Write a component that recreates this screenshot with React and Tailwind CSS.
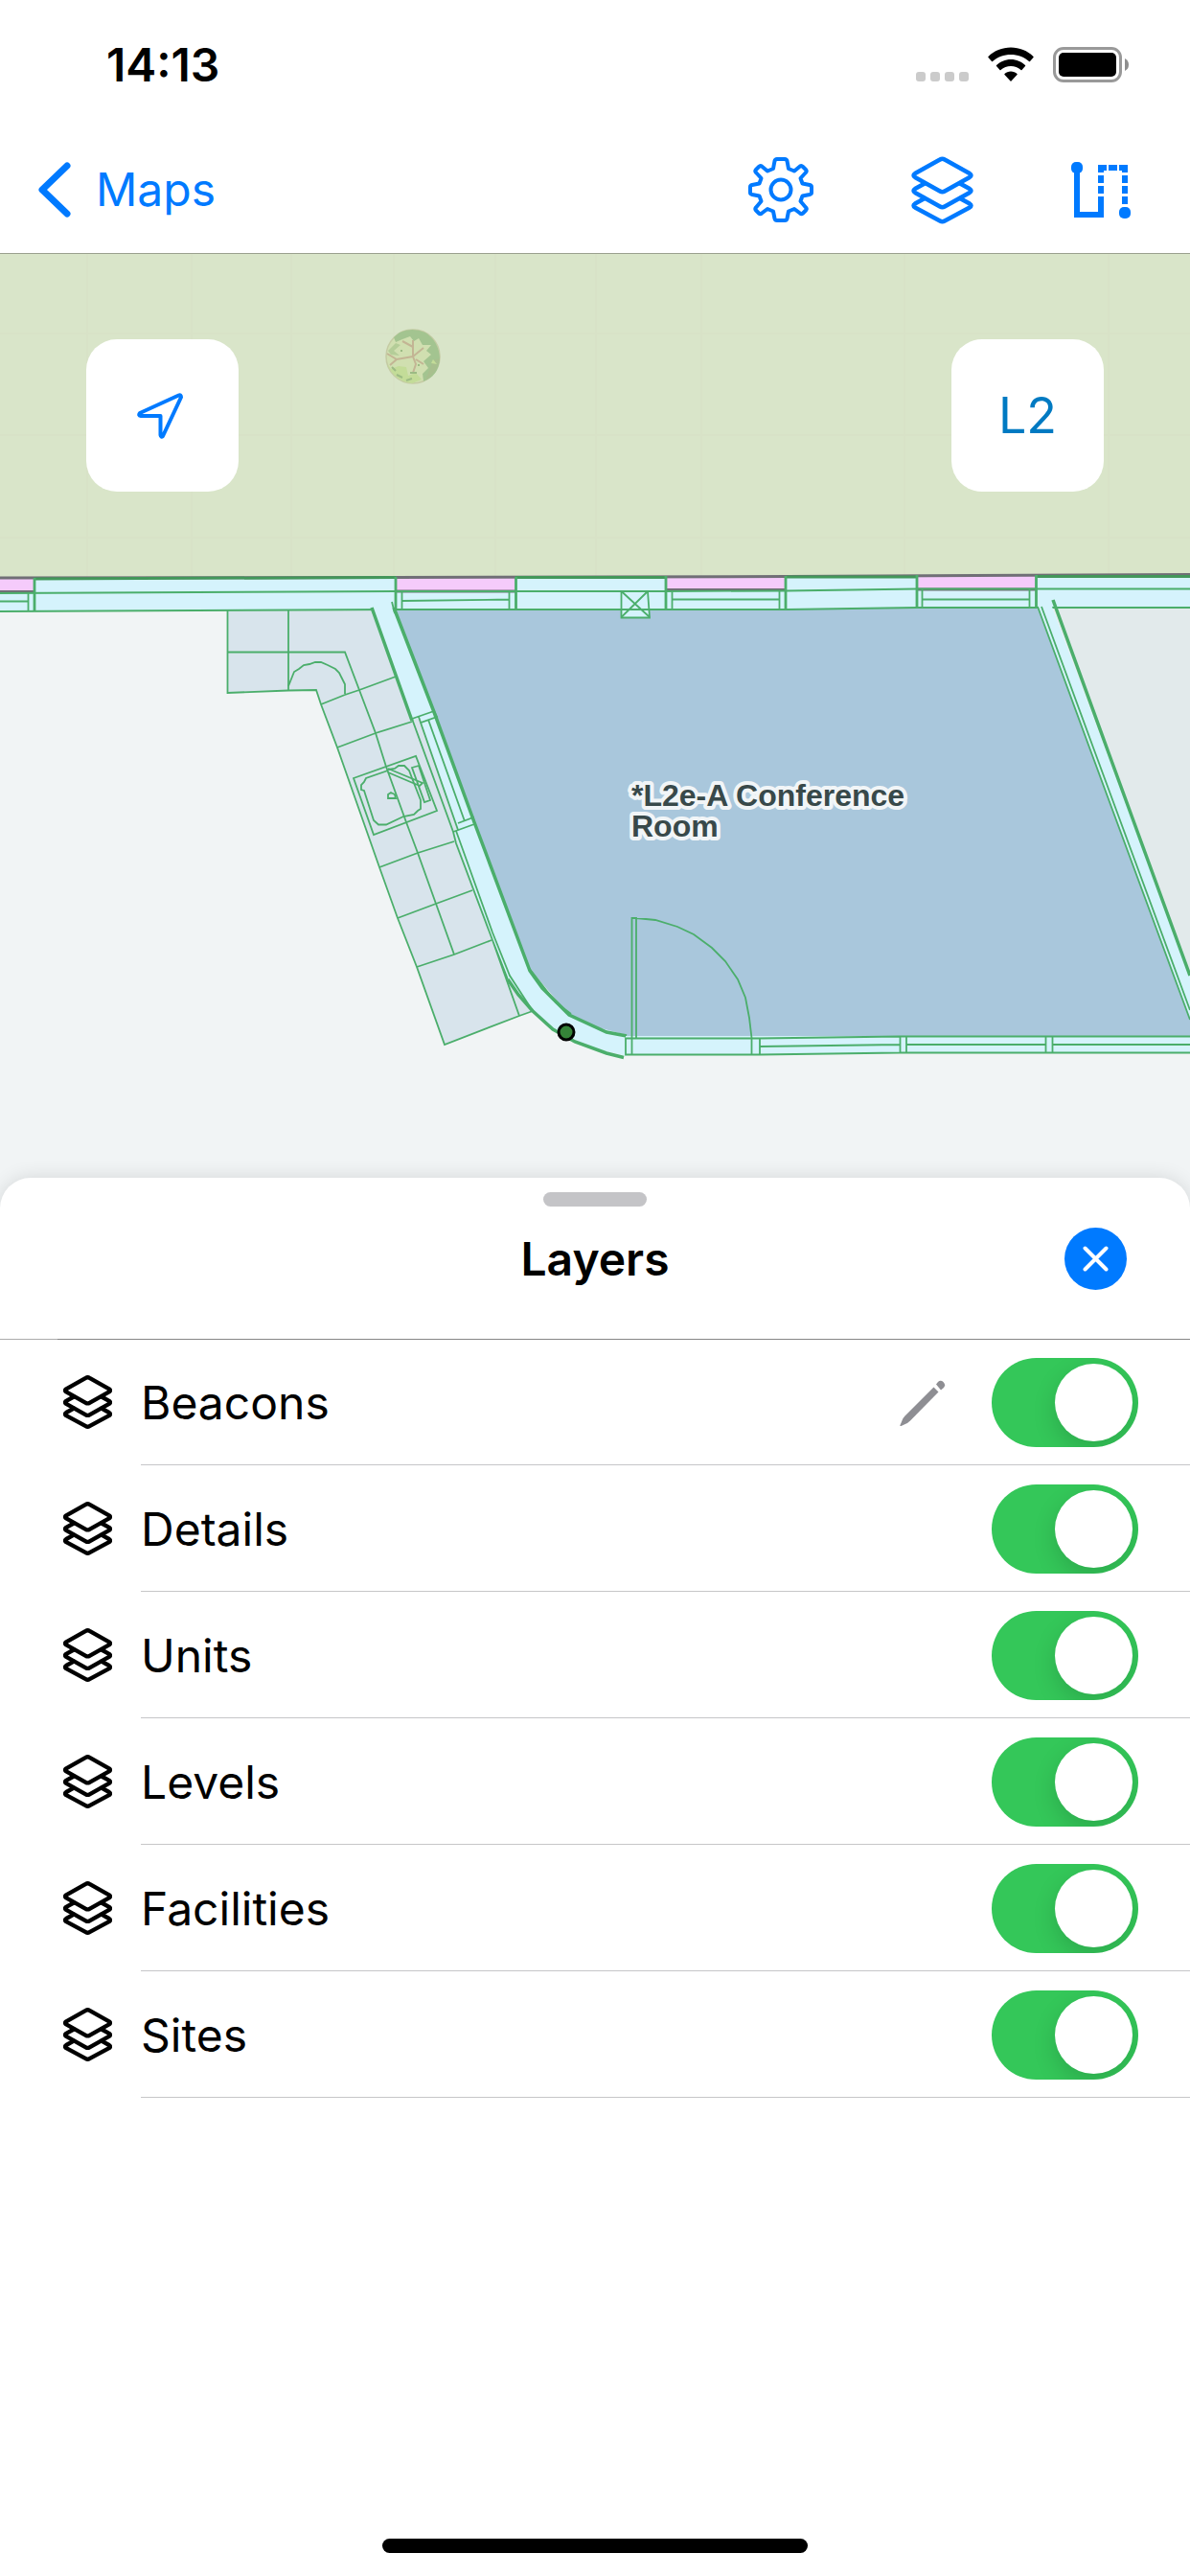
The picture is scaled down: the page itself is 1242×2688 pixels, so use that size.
import { useState } from "react";

const initialLayers = [
  { name: "Beacons", editable: true, visible: true },
  { name: "Details", visible: true },
  { name: "Units", visible: true },
  { name: "Levels", visible: true },
  { name: "Facilities", visible: true },
  { name: "Sites", visible: true },
];

function LayersIcon({ className, strokeWidth }) {
  return (
    <svg
      viewBox="0 0 65 71"
      className={className}
      fill="none"
      stroke="currentColor"
      strokeWidth={strokeWidth}
      strokeLinejoin="round"
      strokeLinecap="round"
      aria-hidden="true"
    >
      <path d="M30 3.5Q32.500 2 35 3.500L61 18Q64 20 61 22L35 36.500Q32.500 38 30 36.500L4 22Q1 20 4 18Z" />
      <path d="M14 28.500L4 34Q1 36 4 38L30 52.500Q32.500 54 35 52.500L61 38Q64 36 61 34L51 28.500" />
      <path d="M14 44L4 49.500Q1 51.500 4 53.500L30 67.500Q32.500 69 35 67.500L61 53.500Q64 51.500 61 49.500L51 44" />
    </svg>
  );
}

function GearIcon() {
  return (
    <svg
      viewBox="0 0 68 68"
      className="size-[68px]"
      fill="none"
      stroke="currentColor"
      strokeWidth="4"
      strokeLinejoin="round"
      aria-hidden="true"
    >
      <circle cx="34" cy="34" r="10.500" />
      <path d="M30 2H38Q40 2 40.500 4L42 12L48 14.500L54 9.500Q55.500 8.500 57 10L60 13Q61.500 14.500 60 16L54.500 22L56.500 27.500L64 29Q66 29.500 66 31V37Q66 38.500 64 39L56.500 40.500L54.500 46L60 52.500Q61.500 54 60 55.500L57 58.500Q55.500 60 54 58.500L48 54L42 56.500L40.500 64Q40 66 38 66H30Q28 66 27.500 64L26 56.500L20 54L14 58.500Q12.500 60 11 58.500L8 55.500Q6.500 54 8 52.500L13.500 46L11.500 40.500L4 39Q2 38.500 2 37V31Q2 29.500 4 29L11.500 27.500L13.500 22L8 16Q6.500 14.500 8 13L11 10Q12.500 8.500 14 9.500L20 14.500L26 12L27.500 4Q28 2 30 2Z" />
    </svg>
  );
}

function RouteIcon() {
  return (
    <svg viewBox="0 0 62 59" className="h-[59px] w-[62px]" fill="none" stroke="currentColor" strokeWidth="6" aria-hidden="true">
      <path d="M6 8V55H31V36" />
      <path d="M31 33V25M31 22V14M28 6H37M31 11V3M39 6H48M50 6H59M56 11V3M56 14V22M56 25V33M56 36V44" />
      <rect x="0" y="0" width="12" height="12" rx="5" fill="currentColor" stroke="none" />
      <rect x="50" y="47" width="12" height="12" rx="5" fill="currentColor" stroke="none" />
    </svg>
  );
}

function StatusBar() {
  return (
    <div className="flex h-[132px] items-start justify-between pt-[38px] pr-16 pl-[111px] text-black">
      <span className="text-5xl leading-[60px] font-semibold">14:13</span>
      <div className="flex items-start gap-5 pt-[11px]">
        <svg viewBox="0 0 55 37" className="h-[37px] w-[55px]" fill="#cbcbcb" aria-hidden="true">
          <rect x="0" y="26" width="10" height="10" rx="3" />
          <rect x="15" y="26" width="10" height="10" rx="3" />
          <rect x="30" y="26" width="10" height="10" rx="3" />
          <rect x="45" y="26" width="10" height="10" rx="3" />
        </svg>
        <svg viewBox="0 0 48 37" className="h-[37px] w-12" aria-hidden="true">
          <path d="M24 0.500C33 0.500 41.500 4 47.500 10Q48 10.500 47.500 11L44 15Q43.500 15.500 43 15C38 10.500 31 8 24 8S10 10.500 5 15Q4.500 15.500 4 15L0.500 11Q0 10.500 0.500 10C6.500 4 15 0.500 24 0.500Z" />
          <path d="M24 13C30 13 35 15.500 39 19Q39.500 19.500 39 20L35.500 24Q35 24.500 34.500 24C31.500 21.500 28 20 24 20S16.500 21.500 13.500 24Q13 24.500 12.500 24L9 20Q8.500 19.500 9 19C13 15.500 18 13 24 13Z" />
          <path d="M24 25.500C26.500 25.500 29 26.500 30.500 28Q31 28.500 30.500 29L24.500 35.500Q24 36 23.500 35.500L17.500 29Q17 28.500 17.500 28C19 26.500 21.500 25.500 24 25.500Z" />
        </svg>
        <svg viewBox="0 0 79 37" className="h-[37px] w-[79px]" aria-hidden="true">
          <rect x="1.500" y="1.500" width="69" height="34" rx="9.500" fill="none" stroke="#999" strokeWidth="3" />
          <rect x="6" y="6" width="60" height="25" rx="5" />
          <path d="M75 12Q79 14 79 18.500T75 25Z" fill="#8e8e8e" />
        </svg>
      </div>
    </div>
  );
}

function NavBar() {
  return (
    <nav className="flex h-[132px] items-center justify-between pr-[62px] pl-10 text-[#007aff]">
      <a href="#maps" className="flex items-center gap-[26px] text-5xl leading-[60px]">
        <svg viewBox="0 0 34 58" className="h-[58px] w-[34px]" fill="none" stroke="currentColor" strokeWidth="7" strokeLinecap="round" strokeLinejoin="round" aria-hidden="true">
          <path d="M30 4L4 29L30 54" />
        </svg>
        Maps
      </a>
      <div className="flex items-center gap-[102px]">
        <button type="button" aria-label="Settings">
          <GearIcon />
        </button>
        <button type="button" aria-label="Layers">
          <LayersIcon className="h-[71px] w-[65px]" strokeWidth="4.5" />
        </button>
        <button type="button" aria-label="Directions">
          <RouteIcon />
        </button>
      </div>
    </nav>
  );
}

function FloorPlan() {
  return (
    <svg viewBox="0 265 1242 1015" preserveAspectRatio="xMidYMin slice" className="block h-[1015px] w-full" aria-label="Floor plan of level 2">
      <rect x="0" y="265" width="1242" height="340" fill="#d9e5c9" />
      <path d="M91 265V602M200 265V602M304 265V602M411 265V602M517 265V602M622 265V602M732 265V602M944 265V602M1157 265V602M0 348H1242M0 454H1242M0 561H1242" stroke="#d8e2c7" strokeWidth="2" fill="none" />

      {/* Tree */}
      <g>
        <circle cx="431" cy="372" r="28" fill="#d0dfb0" stroke="#c5cba4" strokeWidth="1.500" />
        <path d="M417 347Q430 341 444 347Q458 356 459 374Q458 392 442 398L441 390L447 384L442 377L450 370L445 366L450 360L441 360L437 353L432 356L428 351L420 354L413 357L411 352Z" fill="#a3c490" />
        <path d="M405 366L413 358L418 360L411 366L417 371L408 370Z" fill="#b4cd98" />
        <path d="M404 380Q412 398 430 400L440 396L434 389L426 392L424 383L416 382L408 385Z" fill="#c3dc98" />
        <path d="M444 397Q457 388 459 374L452 376L448 386Z" fill="#a8bf8e" />
        <path d="M450 379L452 375L456 380Z" fill="#c3dc98" />
        <path d="M431 372L431 355M431 362L420 356M431 372L442 363M431 372L414 375L404 369M414 375L407 381M431 372L434 380L431 389M434 375L442 380" stroke="#c3b594" strokeWidth="2" fill="none" />
        <path d="M409 383L413 387M414 391L420 394M428 389L435 389M424 397L430 395M418 366L420 366M436 381L438 381" stroke="#9cbb84" strokeWidth="2" fill="none" />
      </g>

      {/* Floors */}
      <rect x="0" y="604" width="1242" height="676" fill="#f1f4f5" />
      <path d="M237 637V723L330 720L335 735L464 1090L556 1055L389 636Z" fill="#d8e4ec" />
      <path d="M411 634H1085L1242 1063V1082H654L600 1066L552 1010Z" fill="#a9c7dc" />
      <path d="M1098 632H1242V1020Z" fill="#e2eaeb" />

      {/* Outer wall */}
      <path d="M0 604L1242 600V634L957 634L820 636H413L0 638Z" fill="#d5f3fc" />
      <path d="M0 604H36V618H0ZM413 602H538V617H413ZM695 601H820V615H695ZM957 600H1082V615H957Z" fill="#f5cbfb" />
      <path d="M0 603L413 602.500L821 601.500L1242 599.500" stroke="#706f76" strokeWidth="3" fill="none" />
      <path d="M0 617.500H36M413 617H538M695 615.500H820M957 615H1082" stroke="#706f76" strokeWidth="3" />
      <path d="M36 604L413 602.500M538 602.500H694M821 602H957M1082 601.500H1242" stroke="#43975a" strokeWidth="3" fill="none" />

      <g fill="none" stroke="#4bae6b" strokeWidth="1.800">
        <path d="M0 619L413 617H694L821 616.500L957 614.500H1242M0 638L413 636H821L957 634H1242" />
        <path d="M36 603V638M413 602V636M538.500 602V636M695 601V636M820 601V636M957 600V634M1081.500 600V634" strokeWidth="2.800" />
        <path d="M29.500 619V638M0 627.500H29M419.500 617V636M531.500 617V636M419.500 627L531 625.500M701.500 616V636M813.500 616V636M701.500 625.500H813.500M962.500 615V634M1074.500 615V634M962.500 625.500H1074.500" />
        <path d="M648.500 617H676L678 644.500H648.500Z" fill="#d5f3fc" />
        <path d="M648.500 617L678 644M676 617L648.500 644M648.500 636H678" />

        {/* Kitchen */}
        <path d="M237.500 637V723L301 720.500L330 720L335 735L352 780L396 905L415 958L435 1009L464 1090L542 1060L556 1055" />
        <path d="M301 637V720M237 680.500H360L375 720L392 765L403 800L424 858L436 890L455 943L474 996" />
        <path d="M335 735L360 725L375 720L413 706M352 780L392 765L430 753M396 905L436 890L474 878M415 958L455 943L493 929M435 1009L474 996L513 981" />
        <path d="M301 716L307 701L312 698L317 694L323 693L329 691H335L342 694L350 698L354 702L360 714V724" />
        <path d="M369 812L434 789L456 846L390 871Z" />
        <path d="M405 804L382 812L380 816L377 819V824L380 825L390 856L395 860.500H403L421 852L432 850L436 846L439 844V835L430 812L427 804L422 799L416 799L412 802L405 803" />
        <path d="M405 833V829L408 827L412 829L413 833Z" />
        <path d="M405 802L441 817L438 820L405 806M430 801L437 799L449 835L443 837Z" />
      </g>

      {/* Curved partition */}
      <path d="M389 635L412 635L453 742L495 860L552 1012L565 1030L594 1058L620 1071L654 1080V1102L620 1094L577 1074L556 1055L541 1038L530 1022L514 981L474 868L438 752L430 751Z" fill="#d5f3fc" />
      <path d="M431 751L438 749L478 864L474 867Z" fill="#d8e4ec" />
      <g fill="none" stroke="#4bae6b" strokeWidth="1.800">
        <path d="M388 634L430 752M411 634L453 743L495 858L553 1013L566 1031L594 1059L633 1077L654 1081" strokeWidth="3.500" />
        <path d="M556 1055L577 1074L600 1087L633 1099L651 1103.500M530 1022L541 1038L556 1055" strokeWidth="3.500" />
        <path d="M409 628L412 640M552 1010L580 1046L596 1058" />
        <path d="M430 750L473 868L476 880L514 981L542 1060M476 867L514 973L532 1018L556 1055M514 981L530 1022" />
        <path d="M430 750L453 742L456 748L439 754L437 748M447 751L485 857M439 754L478 866M478 859L494 853L495 860L473 868" />
      </g>

      {/* Door and lower wall */}
      <path d="M653 1081H1242V1099H939L793 1100H653Z" fill="#d5f3fc" />
      <g fill="none" stroke="#4bae6b" strokeWidth="1.800">
        <path d="M659.500 1100V958H664V1083M664 958L684 960L707 967L724 975L743 989L757 1003L770 1022L778 1041L782 1062L784.500 1083V1100" />
        <path d="M793 1083.500H653V1100.500H793V1083.500L939 1081.500H1242M793 1092L939 1090M946 1090H1091M1098 1090H1242M793 1100.500L939 1098.500H1242M939.500 1081V1098M946 1081V1098M1091.500 1081V1098M1098.500 1081V1098" />
      </g>

      {/* Right partition */}
      <path d="M1083 633H1098L1242 1018V1063Z" fill="#d5f3fc" />
      <path d="M1083 633L1137 780L1242 1064M1087 633L1141 780L1242 1054" stroke="#4bae6b" strokeWidth="1.800" fill="none" />
      <path d="M1099 626L1155 780L1242 1018" stroke="#4bae6b" strokeWidth="3.500" fill="none" />

      {/* Beacon */}
      <circle cx="591" cy="1077" r="8" fill="#358338" stroke="#000" strokeWidth="3" />

      <g
        className="font-['Liberation_Sans',Arial,sans-serif] text-[32px] font-bold"
        fill="#38494a"
        stroke="#f1f5f7"
        strokeWidth="8"
        strokeLinejoin="round"
        paintOrder="stroke"
      >
        <text x="659" y="841">*L2e-A Conference</text>
        <text x="659" y="873">Room</text>
      </g>
    </svg>
  );
}

function MapView() {
  return (
    <main className="relative border-t border-[#9aa08e]">
      <FloorPlan />
      <div className="absolute inset-x-[90px] top-[89px] flex justify-between">
        <button type="button" aria-label="My location" className="flex size-[159px] items-center justify-center rounded-[32px] bg-white text-[#007aff]">
          <svg viewBox="0 0 54 48" className="h-12 w-[54px]" fill="none" stroke="currentColor" strokeWidth="4" strokeLinejoin="round" aria-hidden="true">
            <path d="M43.500 2.500L3 21Q1 23.500 4 24H24.500V44Q25 47 27 45L46 4.500Q46 1.500 43.500 2.500Z" />
          </svg>
        </button>
        <button type="button" className="size-[159px] rounded-[32px] bg-white text-[52px] text-[#007ac2]">
          L2
        </button>
      </div>
    </main>
  );
}

function Toggle({ label, checked, onChange }) {
  return (
    <input
      type="checkbox"
      role="switch"
      aria-label={label}
      checked={checked}
      onChange={onChange}
      className="h-[93px] w-[153px] shrink-0 appearance-none overflow-hidden rounded-full bg-[#e9e9eb] p-[6px] before:block before:size-[81px] before:rounded-full before:bg-white before:shadow-[0_9px_24px_rgba(0,0,0,0.15)] before:content-[''] checked:bg-[#34c759] checked:before:ml-[60px]"
    />
  );
}

function LayerRow({ layer, onToggle }) {
  return (
    <li className="flex items-stretch pl-[66px]">
      <div className="flex w-[81px] items-center">
        <LayersIcon className="h-[56px] w-[51px] text-black" strokeWidth="5.5" />
      </div>
      <div className="flex flex-1 items-center border-b border-[#c6c6c8] pt-5 pr-[54px] pb-[18px]">
        <span className="flex-1 text-5xl leading-[60px] text-black">{layer.name}</span>
        {layer.editable && (
          <button type="button" aria-label={`Edit ${layer.name}`} className="mr-12 text-[#8e8e93]">
            <svg viewBox="0 0 48 48" className="size-12" fill="currentColor" aria-hidden="true">
              <path d="M35.500 7.500L40.500 12.500L11 42.500L8 45L1.500 48Q0 48.500 0.500 47L3.500 40L5.500 37.500Z" />
              <path d="M38 4.500L40 2Q42.500 -0.500 45.500 2Q48.500 5 46 8L43 10.500Z" />
            </svg>
          </button>
        )}
        <Toggle label={layer.name} checked={layer.visible} onChange={onToggle} />
      </div>
    </li>
  );
}

function LayersSheet() {
  const [layers, setLayers] = useState(initialLayers);

  const toggleLayer = (name) => {
    setLayers((prev) => prev.map((l) => (l.name === name ? { ...l, visible: !l.visible } : l)));
  };

  return (
    <section className="relative -mt-[51px] flex flex-1 flex-col rounded-t-[32px] bg-white shadow-[0_0_20px_rgba(0,0,0,0.12)]">
      <header className="h-[168px] pt-[15px]">
        <div className="mx-auto h-[15px] w-[108px] rounded-full bg-[#c4c4c7]" />
        <div className="mt-[22px] grid grid-cols-3 items-center px-[66px]">
          <h1 className="col-start-2 text-center text-5xl leading-[60px] font-semibold text-black">Layers</h1>
          <button type="button" aria-label="Close" className="flex size-[65px] items-center justify-center justify-self-end rounded-full bg-[#007aff]">
            <svg viewBox="0 0 27 27" className="size-[27px]" stroke="#fff" strokeWidth="4" strokeLinecap="round" aria-hidden="true">
              <path d="M2.500 2.500L24.500 24.500M24.500 2.500L2.500 24.500" />
            </svg>
          </button>
        </div>
      </header>

      {/* Layer list */}
      <div className="-mb-px flex h-px">
        <div className="w-[60px] bg-[#acacac]" />
        <div className="flex-1 bg-[#868686]" />
      </div>
      <ul>
        {layers.map((layer) => (
          <LayerRow key={layer.name} layer={layer} onToggle={() => toggleLayer(layer.name)} />
        ))}
      </ul>

      <div className="mx-auto mt-auto mb-6 h-[15px] w-[444px] rounded-full bg-black" />
    </section>
  );
}

export default function App() {
  return (
    <div className="flex min-h-screen flex-col bg-white font-[Inter,'Liberation_Sans',sans-serif]">
      <StatusBar />
      <NavBar />
      <MapView />
      <LayersSheet />
    </div>
  );
}
